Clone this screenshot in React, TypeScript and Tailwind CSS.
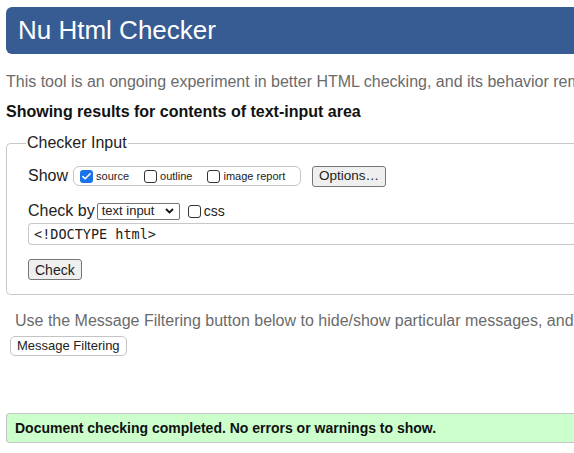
import { Check } from 'lucide-react'

function Box({ checked, label }: { checked?: boolean; label: string }) {
  return (
    <label className="flex items-center gap-[3px]">
      {checked ? (
        <span className="flex h-[13px] w-[13px] items-center justify-center rounded-[3px] bg-[#1a73e8]">
          <Check className="h-[11px] w-[11px] text-white" strokeWidth={3.5} />
        </span>
      ) : (
        <span className="h-[13px] w-[13px] rounded-[3px] border border-[#333] bg-white" />
      )}
      <span>{label}</span>
    </label>
  )
}

export default function App() {
  return (
    <div className="h-[453px] w-[574px] overflow-hidden bg-white font-['Liberation_Sans',Arial,sans-serif] leading-[18px] text-[#222]">
      <div className="w-[900px] pl-[6px] pt-[7px]">
        <h1 className="flex h-[47px] items-center rounded-l-[6px] bg-[#375c93] pb-[1px] pl-[12px] text-[26px] text-white">
          Nu Html Checker
        </h1>

        <p className="mt-[19px] whitespace-nowrap text-[16px] text-[#6b6b6b]">
          This tool is an ongoing experiment in better HTML checking, and its behavior remains subject to change
        </p>
        <p className="mt-[12px] text-[16px] font-bold text-[#111]">
          Showing results for contents of text-input area
        </p>

        <fieldset className="mt-[13px] rounded-l-[5px] border border-r-0 border-[#c8c8c8] pb-[14px] pl-[21px]">
          <legend className="-ml-[2px] px-[1px] text-[16px]">Checker Input</legend>

          <div className="mt-[13px] flex h-[22px] items-center">
            <span className="text-[16px]">Show</span>
            <div className="ml-[5px] flex h-[20px] w-[228px] items-center gap-[15px] rounded-[6px] border border-[#c4c4c4] pl-[6px] text-[11px]">
              <Box checked label="source" />
              <Box label="outline" />
              <Box label="image report" />
            </div>
            <button className="ml-[11px] h-[21px] rounded-[3px] border border-[#767676] bg-[#efefef] px-[6px] text-[13.5px]">
              Options…
            </button>
          </div>

          <div className="mt-[13px] flex h-[22px] items-center">
            <span className="text-[16px]">Check by</span>
            <div className="ml-[2px] flex h-[17px] w-[83px] items-center justify-between rounded-[2px] border border-[#767676] pl-[4px] pr-[5px] text-[13px]">
              <span>text input</span>
              <svg width="9" height="6" viewBox="0 0 9 6" fill="none" stroke="#111" strokeWidth="1.8">
                <path d="M1 1l3.5 3.5L8 1" />
              </svg>
            </div>
            <div className="ml-[8px] text-[14px]">
              <Box label="css" />
            </div>
          </div>

          <div className="mt-[1px] h-[22px] rounded-l-[4px] border border-r-0 border-[#c8c8c8] pl-[5px] font-['DejaVu_Sans_Mono',monospace] text-[13.5px] leading-[20px]">
            &lt;!DOCTYPE html&gt;
          </div>

          <button className="mt-[14px] block h-[21px] rounded-[3px] border border-[#767676] bg-[#efefef] px-[6px] text-[14px]">
            Check
          </button>
        </fieldset>

        <p className="mt-[17px] whitespace-nowrap pl-[9px] text-[16px] text-[#6b6b6b]">
          Use the Message Filtering button below to hide/show particular messages, and to see total counts of errors and warnings.
        </p>
        <button className="ml-[4px] mt-[6px] block h-[20px] rounded-[5px] border border-[#c4c4c4] bg-white px-[6px] text-[13px]">
          Message Filtering
        </button>

        <div className="mt-[57px] flex h-[30px] items-center rounded-l-[4px] border border-r-0 border-[#c4c4c4] bg-[#ccffcc] pl-[8px] text-[14px] font-bold text-[#111]">
          Document checking completed. No errors or warnings to show.
        </div>
      </div>
    </div>
  )
}
